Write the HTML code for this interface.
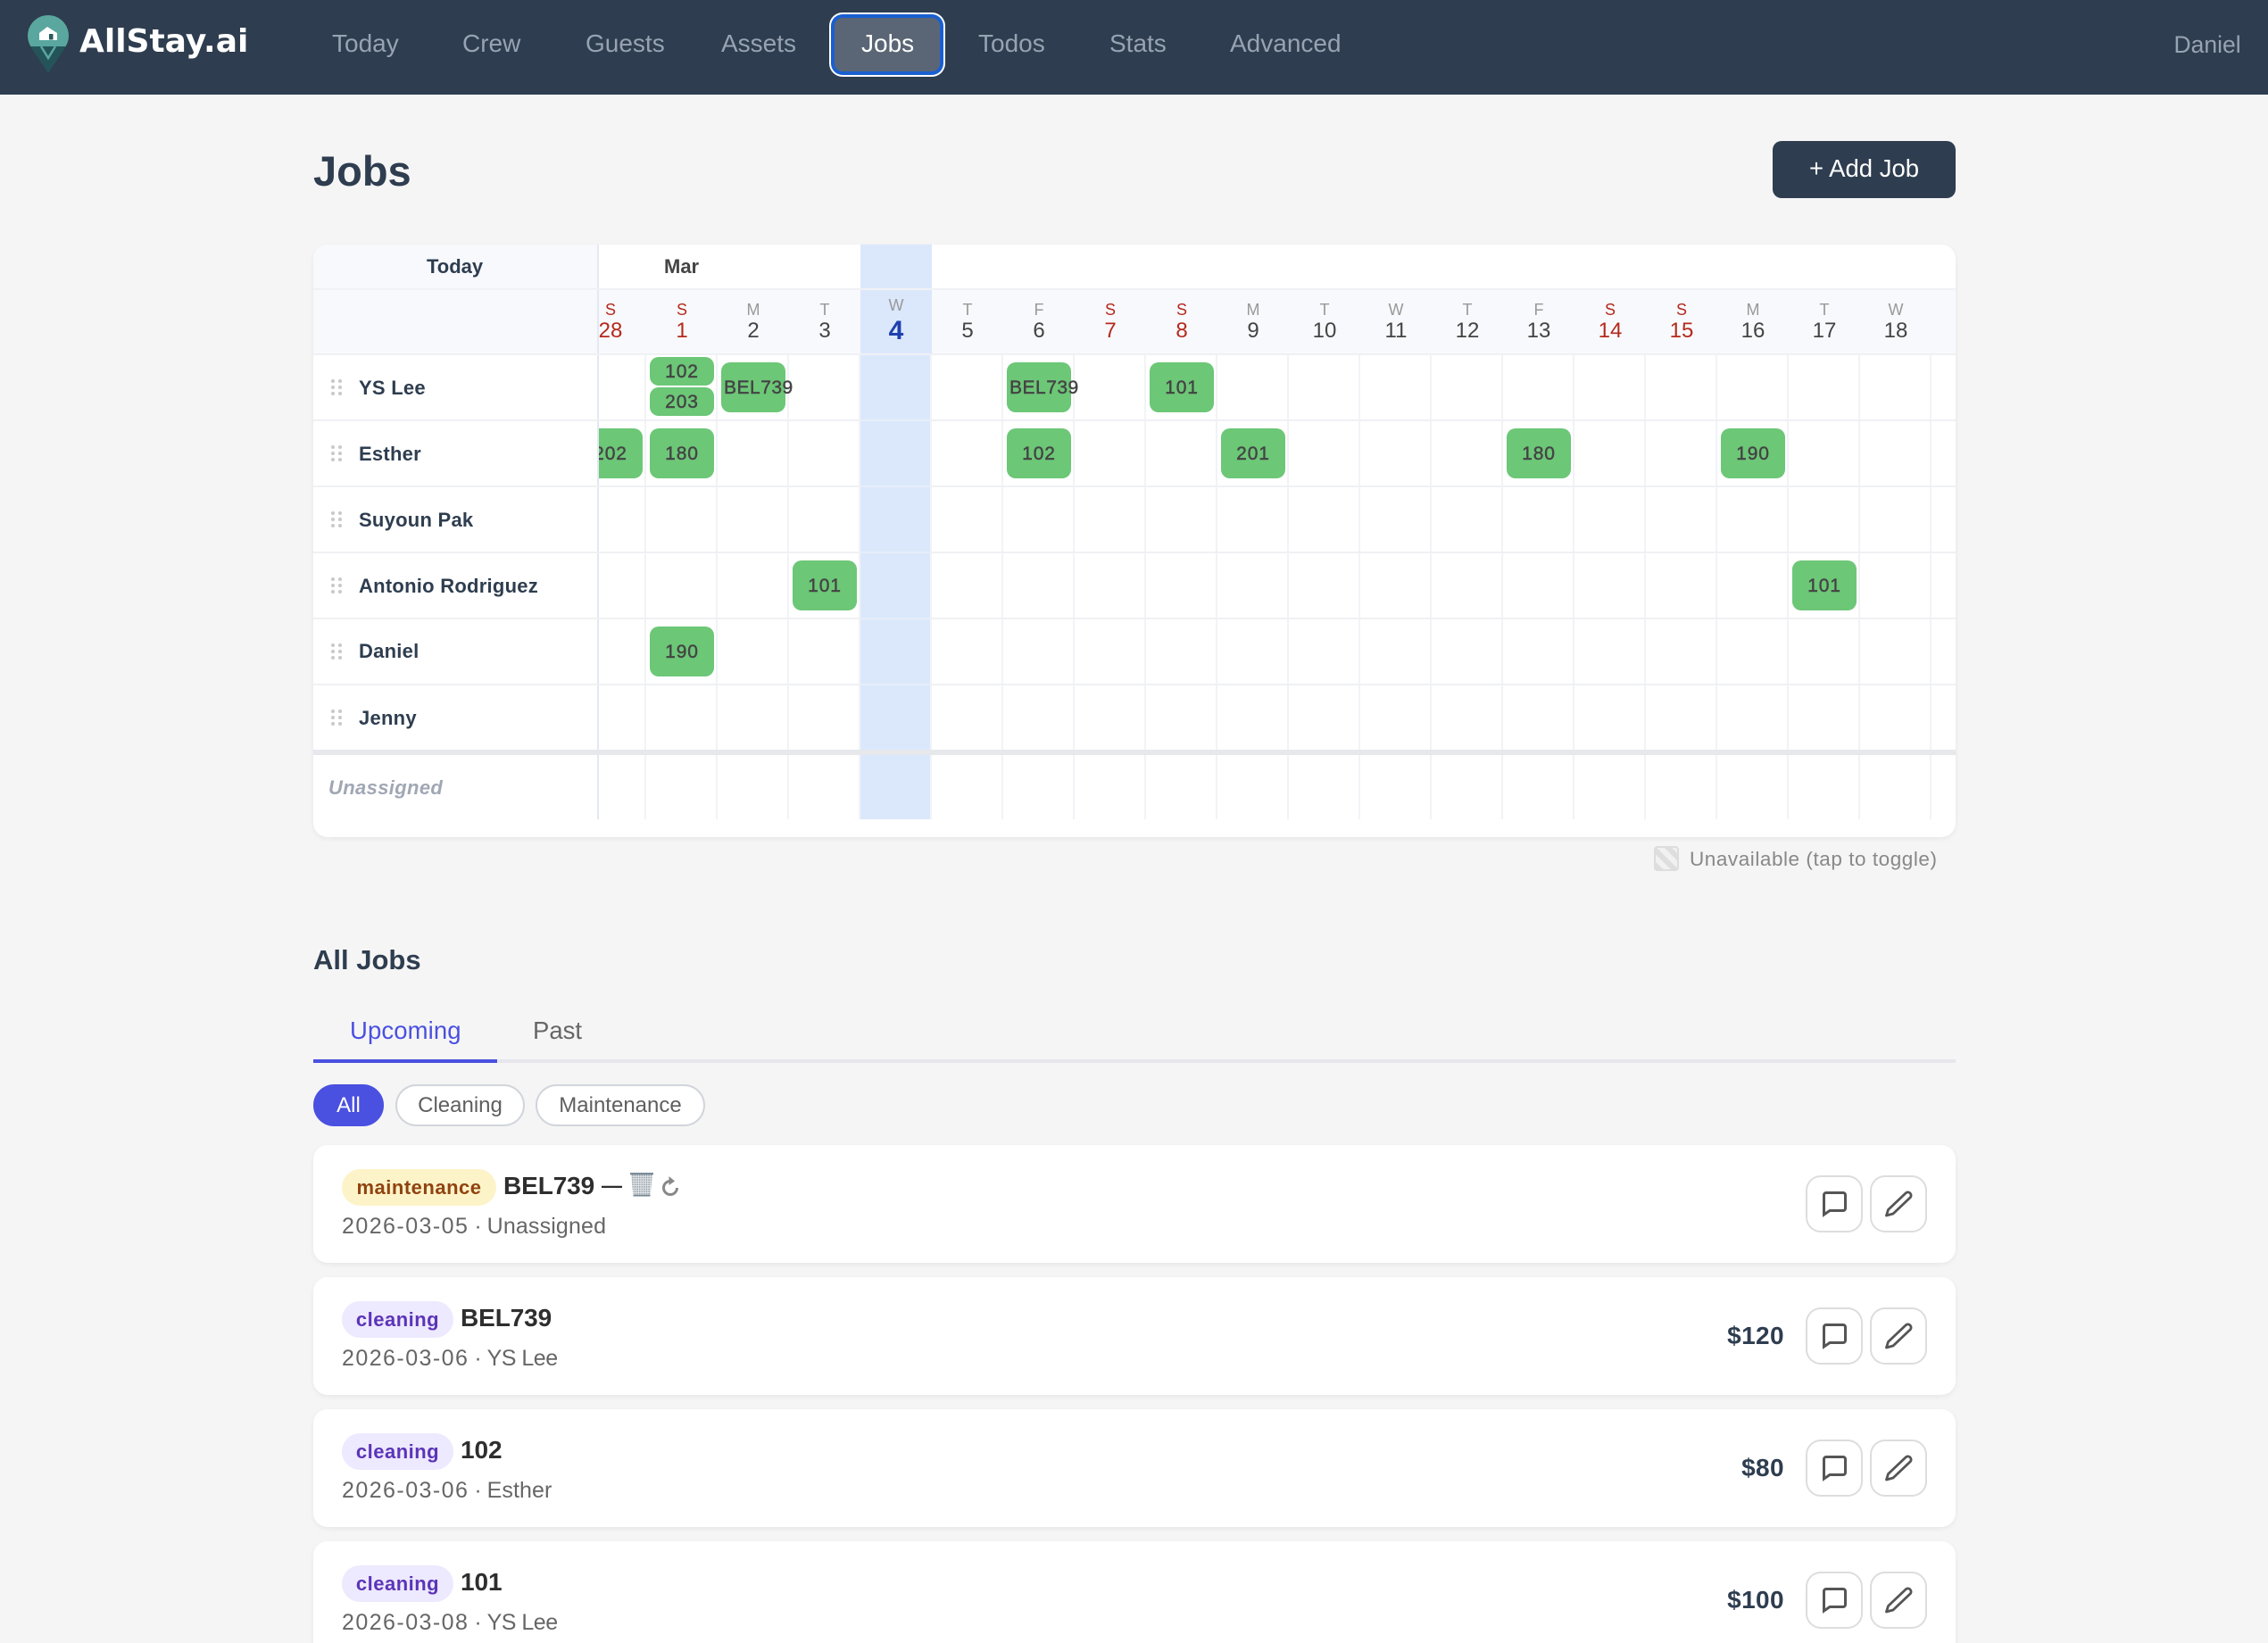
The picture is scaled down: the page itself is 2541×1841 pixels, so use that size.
<!DOCTYPE html>
<html lang="en"><head><meta charset="utf-8"><title>Jobs</title>
<style>
html,body{margin:0;padding:0;width:2541px;height:1841px;overflow:hidden;background:#f5f5f5;font-family:"Liberation Sans",sans-serif}
div,span,svg{position:absolute}
#w{left:0;top:0;width:2541px;height:1841px;overflow:hidden;background:#f5f5f5}
.t{white-space:nowrap;line-height:40px;height:40px}
.n{font-size:28px;color:#97a3b3;top:29px}
.dc{width:80px;text-align:center;white-space:nowrap}
.l{font-size:18px;line-height:24px;height:24px;top:335px;color:#999}
.d{font-size:24px;line-height:30px;height:30px;top:356px;color:#444}
.r{color:#b5291c}
.ch{width:72px;height:56px;background:#6cc777;border-radius:10px;font-size:21px;line-height:58px;text-align:center;color:#444;-webkit-text-stroke:.45px #444;white-space:nowrap;letter-spacing:.9px}
.nm{left:402px;font-size:22px;font-weight:bold;color:#2e3d4f;letter-spacing:.25px}
.hl{left:351px;width:1840px;height:2px;background:#f0f1f4}
.bl{left:964px;width:78px;height:2px;background:#e6edf9}
.dots{left:371px;width:12px;height:18px}
.card{left:351px;width:1840px;height:132px;background:#fff;border-radius:16px;box-shadow:0 2px 6px rgba(0,0,0,.06)}
.bd{left:32px;top:27px;height:41px;border-radius:21px;font-size:22px;font-weight:bold;line-height:41px;text-align:center;letter-spacing:.5px;white-space:nowrap}
.ttl{top:26px;font-size:28px;font-weight:bold;color:#2e2e2e;line-height:40px;white-space:nowrap;letter-spacing:-.1px}
.sub{left:32px;top:71px;font-size:25px;color:#666;line-height:40px;white-space:nowrap}
.sub i{font-style:normal}
.dt{letter-spacing:1.45px}
.sp{letter-spacing:0;word-spacing:-1px}
.pr{right:192px;top:46px;font-size:28px;font-weight:bold;color:#2e3d4f;line-height:40px;letter-spacing:.4px}
.ib{top:34px;width:60px;height:60px;border:2px solid #ddd;border-radius:17px;background:#fff}
.fc{top:1215px;height:43px;border:2px solid #d1d5db;border-radius:24px;background:#fff;color:#5f5f5f;font-size:24px;line-height:44px;text-align:center}
</style></head><body>
<div id="w">

<!-- NAV -->
<div style="left:0;top:0;width:2541px;height:106px;background:#2e3d4f"></div>
<svg style="left:0;top:0" width="110" height="106" viewBox="0 0 110 106">
<path d="M34 52 L74 52 L54 82 Z" fill="#24545a"/>
<path d="M34.4 52 A23 23 0 1 1 73.6 52 Z" fill="#5aa79f"/>
<path d="M46 52 L54 65 L62 52" fill="none" stroke="#5aa79f" stroke-width="2.5"/>
<path d="M44 37 L53 30 L64 37 L64 45 L44 45 Z" fill="#fff"/>
<rect x="55" y="38" width="4.5" height="6.5" fill="#2a5a60"/>
</svg>
<div class="t" style="left:89px;top:27px;font-family:'DejaVu Sans',sans-serif;font-weight:bold;font-size:36px;color:#fff">AllStay.ai</div>
<div class="t n" style="left:372px">Today</div>
<div class="t n" style="left:518px">Crew</div>
<div class="t n" style="left:656px">Guests</div>
<div class="t n" style="left:808px">Assets</div>
<div style="left:935px;top:20px;width:118px;height:60px;background:#5a6675;border-radius:9px;box-shadow:0 0 0 4px #1a5fd0,0 0 0 6px #fff"></div>
<div class="t n" style="left:965px;color:#fff">Jobs</div>
<div class="t n" style="left:1096px">Todos</div>
<div class="t n" style="left:1243px">Stats</div>
<div class="t n" style="left:1378px">Advanced</div>
<div class="t n" style="left:2435.5px;top:30px;font-size:26.5px">Daniel</div>

<!-- HEADER -->
<div class="t" style="left:351px;top:172px;font-size:47px;font-weight:bold;color:#2e3d4f;height:40px;line-height:40px">Jobs</div>
<div style="left:1986px;top:158px;width:205px;height:64px;background:#2e3d4f;border-radius:10px;color:#fff;font-size:27.5px;line-height:62px;text-align:center;white-space:nowrap">+ Add Job</div>

<!-- CALENDAR CARD -->
<div style="left:351px;top:274px;width:1840px;height:664px;background:#fff;border-radius:16px;box-shadow:0 2px 6px rgba(0,0,0,.06)"></div>
<div style="left:671px;top:325px;width:1520px;height:71px;background:#f8f9fc"></div>
<div style="left:964px;top:274px;width:80px;height:49px;background:#dbe8fc"></div>
<div style="left:964px;top:325px;width:80px;height:71px;background:#dbe8fc"></div>
<div style="left:964px;top:398px;width:78px;height:520px;background:#dbe8fc"></div>
<div style="left:671px;top:398px;width:1493px;height:520px;background:repeating-linear-gradient(90deg,transparent 0,transparent 51px,#f2f3f6 51px,#f2f3f6 53px,transparent 53px,transparent 80px);background-size:auto"></div>

<!-- CHIPS -->
<div class="ch" style="left:728px;top:400px;height:32px;line-height:34px">102</div>
<div class="ch" style="left:728px;top:434px;height:32px;line-height:34px">203</div>
<div class="ch" style="left:808px;top:406px;text-align:left;padding-left:3px;width:69px;letter-spacing:.5px">BEL739</div>
<div class="ch" style="left:1128px;top:406px;text-align:left;padding-left:3px;width:69px;letter-spacing:.5px">BEL739</div>
<div class="ch" style="left:1288px;top:406px">101</div>
<div class="ch" style="left:648px;top:480px">202</div>
<div class="ch" style="left:728px;top:480px">180</div>
<div class="ch" style="left:1128px;top:480px">102</div>
<div class="ch" style="left:1368px;top:480px">201</div>
<div class="ch" style="left:1688px;top:480px">180</div>
<div class="ch" style="left:1928px;top:480px">190</div>
<div class="ch" style="left:888px;top:628px">101</div>
<div class="ch" style="left:2008px;top:628px">101</div>
<div class="ch" style="left:728px;top:702px">190</div>

<!-- LEFT PANEL -->
<div style="left:351px;top:398px;width:318px;height:520px;background:#fff"></div>
<div style="left:351px;top:274px;width:318px;height:122px;background:#f8f9fc;border-top-left-radius:16px"></div>
<div style="left:669px;top:274px;width:2px;height:644px;background:#e3e8f2"></div>

<!-- LINES -->
<div class="hl" style="top:323px"></div>
<div class="hl" style="top:396px"></div>
<div class="hl" style="top:470px"></div>
<div class="hl" style="top:544px"></div>
<div class="hl" style="top:618px"></div>
<div class="hl" style="top:692px"></div>
<div class="hl" style="top:766px"></div>
<div class="hl" style="top:840px;height:6px;background:#e6e8ec"></div>
<div class="bl" style="top:470px"></div>
<div class="bl" style="top:544px"></div>
<div class="bl" style="top:618px"></div>
<div class="bl" style="top:692px"></div>
<div class="bl" style="top:766px"></div>

<div class="t" style="left:478px;top:279px;font-size:22px;font-weight:bold;color:#2e3d4f">Today</div>
<div class="t" style="left:744px;top:279px;font-size:22px;font-weight:bold;color:#444">Mar</div>

<!-- DAY HEADERS -->
<div class="dc l r" style="left:644px">S</div><div class="dc d r" style="left:644px">28</div>
<div class="dc l r" style="left:724px">S</div><div class="dc d r" style="left:724px">1</div>
<div class="dc l" style="left:804px">M</div><div class="dc d" style="left:804px">2</div>
<div class="dc l" style="left:884px">T</div><div class="dc d" style="left:884px">3</div>
<div class="dc l" style="left:964px;top:330px">W</div><div class="dc d" style="left:964px;font-size:30px;font-weight:bold;color:#1e40af">4</div>
<div class="dc l" style="left:1044px">T</div><div class="dc d" style="left:1044px">5</div>
<div class="dc l" style="left:1124px">F</div><div class="dc d" style="left:1124px">6</div>
<div class="dc l r" style="left:1204px">S</div><div class="dc d r" style="left:1204px">7</div>
<div class="dc l r" style="left:1284px">S</div><div class="dc d r" style="left:1284px">8</div>
<div class="dc l" style="left:1364px">M</div><div class="dc d" style="left:1364px">9</div>
<div class="dc l" style="left:1444px">T</div><div class="dc d" style="left:1444px">10</div>
<div class="dc l" style="left:1524px">W</div><div class="dc d" style="left:1524px">11</div>
<div class="dc l" style="left:1604px">T</div><div class="dc d" style="left:1604px">12</div>
<div class="dc l" style="left:1684px">F</div><div class="dc d" style="left:1684px">13</div>
<div class="dc l r" style="left:1764px">S</div><div class="dc d r" style="left:1764px">14</div>
<div class="dc l r" style="left:1844px">S</div><div class="dc d r" style="left:1844px">15</div>
<div class="dc l" style="left:1924px">M</div><div class="dc d" style="left:1924px">16</div>
<div class="dc l" style="left:2004px">T</div><div class="dc d" style="left:2004px">17</div>
<div class="dc l" style="left:2084px">W</div><div class="dc d" style="left:2084px">18</div>

<!-- NAMES -->
<svg class="dots" style="top:425px" viewBox="0 0 12 18"><g fill="#c9c9c9"><circle cx="2" cy="2" r="2"/><circle cx="10" cy="2" r="2"/><circle cx="2" cy="9" r="2"/><circle cx="10" cy="9" r="2"/><circle cx="2" cy="16" r="2"/><circle cx="10" cy="16" r="2"/></g></svg>
<svg class="dots" style="top:499px" viewBox="0 0 12 18"><g fill="#c9c9c9"><circle cx="2" cy="2" r="2"/><circle cx="10" cy="2" r="2"/><circle cx="2" cy="9" r="2"/><circle cx="10" cy="9" r="2"/><circle cx="2" cy="16" r="2"/><circle cx="10" cy="16" r="2"/></g></svg>
<svg class="dots" style="top:573px" viewBox="0 0 12 18"><g fill="#c9c9c9"><circle cx="2" cy="2" r="2"/><circle cx="10" cy="2" r="2"/><circle cx="2" cy="9" r="2"/><circle cx="10" cy="9" r="2"/><circle cx="2" cy="16" r="2"/><circle cx="10" cy="16" r="2"/></g></svg>
<svg class="dots" style="top:647px" viewBox="0 0 12 18"><g fill="#c9c9c9"><circle cx="2" cy="2" r="2"/><circle cx="10" cy="2" r="2"/><circle cx="2" cy="9" r="2"/><circle cx="10" cy="9" r="2"/><circle cx="2" cy="16" r="2"/><circle cx="10" cy="16" r="2"/></g></svg>
<svg class="dots" style="top:721px" viewBox="0 0 12 18"><g fill="#c9c9c9"><circle cx="2" cy="2" r="2"/><circle cx="10" cy="2" r="2"/><circle cx="2" cy="9" r="2"/><circle cx="10" cy="9" r="2"/><circle cx="2" cy="16" r="2"/><circle cx="10" cy="16" r="2"/></g></svg>
<svg class="dots" style="top:795px" viewBox="0 0 12 18"><g fill="#c9c9c9"><circle cx="2" cy="2" r="2"/><circle cx="10" cy="2" r="2"/><circle cx="2" cy="9" r="2"/><circle cx="10" cy="9" r="2"/><circle cx="2" cy="16" r="2"/><circle cx="10" cy="16" r="2"/></g></svg>
<div class="t nm" style="top:415px">YS Lee</div>
<div class="t nm" style="top:489px">Esther</div>
<div class="t nm" style="top:563px">Suyoun Pak</div>
<div class="t nm" style="top:637px">Antonio Rodriguez</div>
<div class="t nm" style="top:710px">Daniel</div>
<div class="t nm" style="top:785px">Jenny</div>
<div class="t" style="left:368px;top:863px;font-size:22px;font-weight:bold;font-style:italic;color:#a0a7b4;letter-spacing:.35px">Unassigned</div>

<!-- LEGEND -->
<div style="left:1853px;top:948px;width:24px;height:24px;border:2px solid #ddd;border-radius:4px;background:repeating-linear-gradient(45deg,#dedede 0,#dedede 6px,#f1f1f1 6px,#f1f1f1 12px)"></div>
<div class="t" style="left:1893px;top:943px;font-size:22.5px;color:#888;letter-spacing:.55px">Unavailable (tap to toggle)</div>

<!-- ALL JOBS -->
<div class="t" style="left:351px;top:1056px;font-size:31px;font-weight:bold;color:#2e3d4f">All Jobs</div>
<div class="t" style="left:392px;top:1135px;font-size:27.5px;color:#4a50e0;letter-spacing:.1px">Upcoming</div>
<div class="t" style="left:597px;top:1135px;font-size:27.5px;color:#666">Past</div>
<div style="left:351px;top:1187px;width:1840px;height:4px;background:#e6e6ec"></div>
<div style="left:351px;top:1187px;width:206px;height:4px;background:#4a50e0"></div>
<div class="fc" style="left:351px;width:75px;background:#4a50e0;border-color:#4a50e0;color:#fff">All</div>
<div class="fc" style="left:443px;width:141px">Cleaning</div>
<div class="fc" style="left:600px;width:186px">Maintenance</div>

<!-- JOB 1 -->
<div class="card" style="top:1283px">
<div class="bd" style="width:173px;background:#fdf3c8;color:#8f4310">maintenance</div>
<div class="ttl" style="left:213px">BEL739</div>
<div class="ttl" style="left:323px;top:25px;font-size:23px">—</div>
<svg style="left:354px;top:30px" width="28" height="28" viewBox="0 0 28 28">
<defs><pattern id="m" width="2.6" height="2.6" patternUnits="userSpaceOnUse"><rect width="2.6" height="2.6" fill="#e2e5e8"/><circle cx="1.3" cy="1.3" r=".85" fill="#8f9ba5"/></pattern></defs>
<path d="M2 3 L26 3 L23.5 27 L4.5 27 Z" fill="url(#m)"/>
<path d="M1 2.2 H27" stroke="#7d8c99" stroke-width="2.4"/>
<path d="M4.5 26.6 H23.5" stroke="#76858f" stroke-width="1.8"/>
</svg>
<svg style="left:390px;top:34px" width="20" height="24" viewBox="0 0 20 24">
<path d="M10 6.5 A7.5 7.5 0 1 0 17.5 14" fill="none" stroke="#888" stroke-width="3"/>
<path d="M8.5 1 L15 6.5 L8.5 11 Z" fill="#888"/>
</svg>
<div class="sub"><i class="dt">2026-03-05</i><i class="sp"> · </i><i style="letter-spacing:.15px">Unassigned</i></div>
<div class="ib" style="left:1672px"><svg style="left:-2px;top:-2px" width="64" height="64" viewBox="0 0 64 64"><path d="M20.5 22a2.5 2.5 0 0 1 2.5-2.5h19a2.5 2.5 0 0 1 2.5 2.5v15a2.5 2.5 0 0 1-2.5 2.5H27l-6.5 4.5z" fill="none" stroke="#555" stroke-width="3" stroke-linejoin="miter"/></svg></div>
<div class="ib" style="left:1744px"><svg style="left:-2px;top:-2px" width="64" height="64" viewBox="0 0 64 64"><path d="M39.5 20.5 L20.5 38.5 L18.5 45 L26 43 L45.5 24.5 A3.6 3.6 0 0 0 39.5 20.5 Z" fill="none" stroke="#555" stroke-width="2.8" stroke-linejoin="round"/></svg></div>
</div>

<!-- JOB 2 -->
<div class="card" style="top:1431px">
<div class="bd" style="width:125px;background:#ede9fe;color:#5b34b8">cleaning</div>
<div class="ttl" style="left:165px">BEL739</div>
<div class="sub"><i class="dt">2026-03-06</i><i class="sp"> · </i><i style="letter-spacing:-.5px">YS Lee</i></div>
<div class="pr">$120</div>
<div class="ib" style="left:1672px"><svg style="left:-2px;top:-2px" width="64" height="64" viewBox="0 0 64 64"><path d="M20.5 22a2.5 2.5 0 0 1 2.5-2.5h19a2.5 2.5 0 0 1 2.5 2.5v15a2.5 2.5 0 0 1-2.5 2.5H27l-6.5 4.5z" fill="none" stroke="#555" stroke-width="3" stroke-linejoin="miter"/></svg></div>
<div class="ib" style="left:1744px"><svg style="left:-2px;top:-2px" width="64" height="64" viewBox="0 0 64 64"><path d="M39.5 20.5 L20.5 38.5 L18.5 45 L26 43 L45.5 24.5 A3.6 3.6 0 0 0 39.5 20.5 Z" fill="none" stroke="#555" stroke-width="2.8" stroke-linejoin="round"/></svg></div>
</div>

<!-- JOB 3 -->
<div class="card" style="top:1579px">
<div class="bd" style="width:125px;background:#ede9fe;color:#5b34b8">cleaning</div>
<div class="ttl" style="left:165px">102</div>
<div class="sub"><i class="dt">2026-03-06</i><i class="sp"> · </i><i style="letter-spacing:.1px">Esther</i></div>
<div class="pr">$80</div>
<div class="ib" style="left:1672px"><svg style="left:-2px;top:-2px" width="64" height="64" viewBox="0 0 64 64"><path d="M20.5 22a2.5 2.5 0 0 1 2.5-2.5h19a2.5 2.5 0 0 1 2.5 2.5v15a2.5 2.5 0 0 1-2.5 2.5H27l-6.5 4.5z" fill="none" stroke="#555" stroke-width="3" stroke-linejoin="miter"/></svg></div>
<div class="ib" style="left:1744px"><svg style="left:-2px;top:-2px" width="64" height="64" viewBox="0 0 64 64"><path d="M39.5 20.5 L20.5 38.5 L18.5 45 L26 43 L45.5 24.5 A3.6 3.6 0 0 0 39.5 20.5 Z" fill="none" stroke="#555" stroke-width="2.8" stroke-linejoin="round"/></svg></div>
</div>

<!-- JOB 4 -->
<div class="card" style="top:1727px">
<div class="bd" style="width:125px;background:#ede9fe;color:#5b34b8">cleaning</div>
<div class="ttl" style="left:165px">101</div>
<div class="sub"><i class="dt">2026-03-08</i><i class="sp"> · </i><i style="letter-spacing:-.5px">YS Lee</i></div>
<div class="pr">$100</div>
<div class="ib" style="left:1672px"><svg style="left:-2px;top:-2px" width="64" height="64" viewBox="0 0 64 64"><path d="M20.5 22a2.5 2.5 0 0 1 2.5-2.5h19a2.5 2.5 0 0 1 2.5 2.5v15a2.5 2.5 0 0 1-2.5 2.5H27l-6.5 4.5z" fill="none" stroke="#555" stroke-width="3" stroke-linejoin="miter"/></svg></div>
<div class="ib" style="left:1744px"><svg style="left:-2px;top:-2px" width="64" height="64" viewBox="0 0 64 64"><path d="M39.5 20.5 L20.5 38.5 L18.5 45 L26 43 L45.5 24.5 A3.6 3.6 0 0 0 39.5 20.5 Z" fill="none" stroke="#555" stroke-width="2.8" stroke-linejoin="round"/></svg></div>
</div>

</div>
</body></html>
